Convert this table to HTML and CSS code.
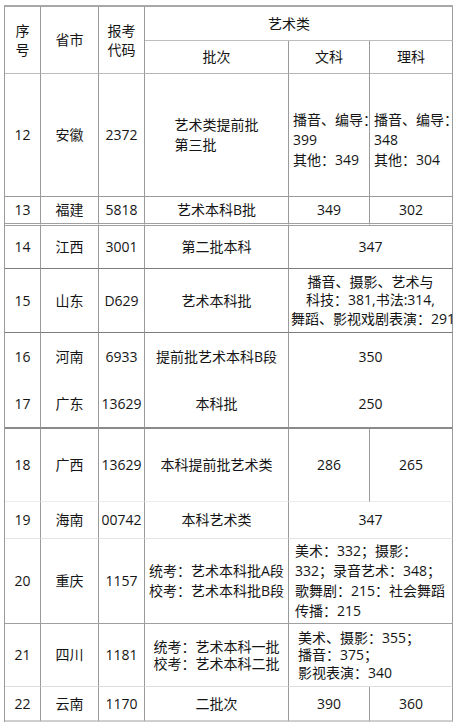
FILE: index.html
```html
<!DOCTYPE html>
<html lang="zh-CN">
<head>
<meta charset="utf-8">
<title>艺术类分数线</title>
<link rel="stylesheet" href="styles.css">
</head>
<body>
<table class="score">
  <colgroup>
    <col class="c1"><col class="c2"><col class="c3"><col class="c4"><col class="c5"><col class="c6">
  </colgroup>
  <tr class="h1">
    <td rowspan="2" class="tight">序<br>号</td>
    <td rowspan="2">省市</td>
    <td rowspan="2" class="loose">报考<br>代码</td>
    <td colspan="3" class="art">艺术类</td>
  </tr>
  <tr class="h2">
    <td>批次</td><td>文科</td><td>理科</td>
  </tr>
  <tr class="r12">
    <td>12</td><td>安徽</td><td>2372</td>
    <td><span class="blk">艺术类提前批<br>第三批</span></td>
    <td class="left nw">播音、编导：<br>399<br>其他：349</td>
    <td class="left nw">播音、编导：<br>348<br>其他：304</td>
  </tr>
  <tr class="r13">
    <td>13</td><td>福建</td><td>5818</td><td>艺术本科B批</td><td>349</td><td>302</td>
  </tr>
  <tr class="r14">
    <td>14</td><td>江西</td><td>3001</td><td>第二批本科</td><td colspan="2">347</td>
  </tr>
  <tr class="r15">
    <td>15</td><td>山东</td><td>D629</td><td>艺术本科批</td>
    <td colspan="2" class="nw multi">播音、摄影、艺术与<br>科技：381,书法:314,<br>舞蹈、影视戏剧表演：291</td>
  </tr>
  <tr class="r16">
    <td>16</td><td>河南</td><td>6933</td><td class="nw">提前批艺术本科B段</td><td colspan="2">350</td>
  </tr>
  <tr class="r17">
    <td>17</td><td>广东</td><td>13629</td><td>本科批</td><td colspan="2">250</td>
  </tr>
  <tr class="r18">
    <td>18</td><td>广西</td><td>13629</td><td>本科提前批艺术类</td><td>286</td><td>265</td>
  </tr>
  <tr class="r19">
    <td>19</td><td>海南</td><td>00742</td><td>本科艺术类</td><td colspan="2">347</td>
  </tr>
  <tr class="r20">
    <td>20</td><td>重庆</td><td>1157</td>
    <td class="nw"><span class="blk">统考：艺术本科批A段<br>校考：艺术本科批B段</span></td>
    <td colspan="2" class="left nw pl6">美术：332；摄影：<br>332；录音艺术：348；<br>歌舞剧：215：社会舞蹈<br>传播：215</td>
  </tr>
  <tr class="r21">
    <td>21</td><td>四川</td><td>1181</td>
    <td class="nw multi"><span class="blk">统考：艺术本科一批<br>校考：艺术本科二批</span></td>
    <td colspan="2" class="left nw pl9 multi">美术、摄影：355；<br>播音：375；<br>影视表演：340</td>
  </tr>
  <tr class="r22">
    <td>22</td><td>云南</td><td>1170</td><td>二批次</td><td>390</td><td>360</td>
  </tr>
</table>
</body>
</html>
```

FILE: styles.css
```css
html, body {
  margin: 0;
  padding: 0;
  background: #ffffff;
}

body {
  font-family: "Open Sans", "Noto Sans CJK SC", sans-serif;
  font-size: 14px;
  color: #151515;
}

.score {
  margin: 5px 0 0 4px;
  width: 449px;
  table-layout: fixed;
  border-collapse: separate;
  border-spacing: 0;
  border-top: 2px solid #a8a8a8;
  border-left: 1px solid #9a9a9a;
}

.c1 { width: 36px; }
.c2 { width: 58px; }
.c3 { width: 46px; }
.c4 { width: 144px; }
.c5 { width: 81px; }
.c6 { width: 83px; }

.score td {
  box-sizing: border-box;
  padding: 0 2px;
  text-align: center;
  vertical-align: middle;
  line-height: 20px;
  border-right: 1px solid #9a9a9a;
  border-bottom: 1px solid #9a9a9a;
  overflow: visible;
}

.tight { line-height: 19px !important; }
.loose { line-height: 19px !important; }
.art { padding-right: 21px !important; }

.blk {
  display: inline-block;
  text-align: left;
}

.left { text-align: left !important; padding-left: 4px !important; }
.nw { white-space: nowrap; }
.multi { line-height: 18.5px !important; }
.pl6 { padding-left: 6px !important; }
.pl9 { padding-left: 9px !important; }

.h1 { height: 34px; }
.h1 td { border-bottom-color: #bdbdbd; }
.h2 { height: 33px; }
.h2 td { border-bottom-color: #b5b5b5; }

.r12 { height: 123px; }
.r12 td.left { padding-top: 10px; }
.r13 { height: 29px; }
.r13 td { border-bottom: 3px double #a0a0a0; }
.r14 { height: 43px; }
.r14 td { border-bottom-color: #7d7d7d; }
.r15 { height: 64px; }
.r15 td { border-bottom-color: #7d7d7d; }
.r16 { height: 48px; }
.r16 td { border-bottom: none; }
.r17 { height: 48px; }
.r17 td { border-bottom: 2px solid #8a8a8a; }
.r18 { height: 73px; }
.r18 td { border-bottom-color: #ececec; }
.r19 { height: 37px; }
.r19 td { border-bottom-color: #e4e4e4; }
.r20 { height: 85px; }
.r20 td { border-bottom-color: #a0a0a0; }
.r21 { height: 63px; }
.r21 td { border-bottom-color: #dedede; }
.r21 td.multi { line-height: 17.5px !important; }
.r22 { height: 35px; }
.r22 td { border-bottom: 2px solid #cfcfcf; }
```
